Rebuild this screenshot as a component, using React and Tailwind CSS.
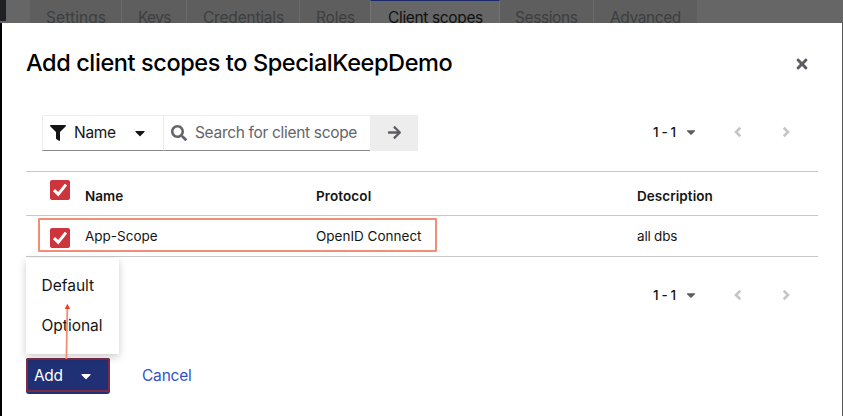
import React from "react";
import {
  FaFilter,
  FaCaretDown,
  FaSearch,
  FaTimes,
  FaArrowRight,
} from "react-icons/fa";

function Tab({ className, label, text }) {
  return (
    <div className={`h-full shrink-0 pt-[8px] leading-[20px] whitespace-nowrap ${className}`}>
      <span className={text}>{label}</span>
    </div>
  );
}

function Check() {
  return (
    <div className="flex h-5 w-5 items-center justify-center rounded-[2px] bg-[#cd343b]">
      <svg width="20" height="20" viewBox="0 0 20 20" fill="none">
        <path d="M4 10.2 L8.2 14.2 L16 4.6" stroke="white" strokeWidth="3" />
      </svg>
    </div>
  );
}

function Angle({ d, className }) {
  return (
    <svg className={className} width="10" height="12" viewBox="0 0 10 12" fill="none">
      <path d={d} stroke="#c6c6c6" strokeWidth="2.6" />
    </svg>
  );
}

function Pagination() {
  return (
    <div className="flex h-[34px] w-[166px] items-center">
      <span className="w-[25px] pl-px text-[13.5px] font-medium tracking-[-0.4px] whitespace-nowrap text-[#151515]">1 - 1</span>
      <FaCaretDown className="ml-[9px] h-[14px] w-[10px] text-[#5b5d62]" size={14} />
      <Angle className="ml-[37px]" d="M7.3 1.8 L3 6 L7.3 10.2" />
      <Angle className="ml-[38px]" d="M2.7 1.8 L7 6 L2.7 10.2" />
    </div>
  );
}

export default function App() {
  return (
    <div className="relative h-[416px] w-[843px] overflow-hidden bg-black font-['Inter',sans-serif] text-[#151515]">
      <div className="flex h-[23px] bg-[#666666] text-[15.5px] text-[#3c3e41]">
        <div className="h-[21px] w-[6px] shrink-0 bg-[#202124]" />
        <div className="w-[24px] shrink-0" />
        <Tab label="Settings" className="w-[92px] border-r border-[#6c6c6c] bg-[#5e5e5e] pl-[16px]" text="tracking-[0.1px]" />
        <Tab label="Keys" className="w-[65px] border-r border-[#6c6c6c] bg-[#5e5e5e] pl-[16px]" text="tracking-[-0.7px]" />
        <Tab label="Credentials" className="w-[113px] border-r border-[#6c6c6c] bg-[#5e5e5e] pl-[16px]" text="tracking-[-0.2px]" />
        <Tab label="Roles" className="w-[70px] bg-[#5e5e5e] pl-[16px]" text="tracking-[-0.2px]" />
        <div className="h-full w-[130px] shrink-0 border-x border-t border-x-[#737373] border-t-[#1b2868] bg-[#666666] pt-[7px] pl-[17px] leading-[20px] whitespace-nowrap text-[#111111]">
          <span className="tracking-[-0.35px]">Client scopes</span>
        </div>
        <Tab label="Sessions" className="w-[94px] border-r border-[#6c6c6c] bg-[#5e5e5e] pl-[15px]" text="tracking-[-0.4px]" />
        <Tab label="Advanced" className="w-[103px] bg-[#5e5e5e] pl-[16px]" text="tracking-[-0.4px]" />
      </div>

      <div className="relative ml-[2px] h-[393px] border-r border-[#58585a] bg-white pr-6 pl-6">
        <div className="flex h-[92px] items-start justify-between pt-[24px]">
          <h1 className="text-[23.5px] leading-[32px] font-medium tracking-[-0.4px] whitespace-nowrap text-black">
            Add client scopes to SpecialKeepDemo
          </h1>
          <FaTimes className="mt-[9px] mr-[8px] text-[#5b5d62]" size={16} />
        </div>

        <div className="flex h-[56px] justify-between">
          <div className="ml-4 flex h-9 text-[15.5px]">
            <div className="flex w-[122px] items-center border border-[#ededed] border-b-[#85878a] pl-[7px]">
              <FaFilter size={16} />
              <span className="ml-[8px] w-[58px] tracking-[-0.3px]">Name</span>
              <FaCaretDown size={16} />
            </div>
            <div className="flex w-[206px] items-center border-t border-b border-t-[#ededed] border-b-[#85878a] pl-[7px] text-[#63656a]">
              <FaSearch size={16} />
              <span className="ml-[8px] tracking-[-0.32px] whitespace-nowrap">Search for client scope</span>
            </div>
            <div className="flex w-12 items-center justify-center bg-[#ededed] text-[#5b5d62]">
              <FaArrowRight className="mb-[2px]" size={15} />
            </div>
          </div>
          <Pagination />
        </div>

        <div className="h-[86px] border-y border-[#c8c8c8] text-[13.5px]">
          <div className="flex h-[44px] border-b border-[#c8c8c8] font-semibold">
            <div className="w-[59px] pt-[8px] pl-6"><Check /></div>
            <div className="w-[231px] pt-[14px] leading-[20px]">Name</div>
            <div className="w-[321px] pt-[14px] leading-[20px] tracking-[0.1px]">Protocol</div>
            <div className="pt-[14px] leading-[20px] tracking-[0.05px]">Description</div>
          </div>
          <div className="flex h-[40px]">
            <div className="w-[59px] pt-[12px] pl-6"><Check /></div>
            <div className="w-[231px] pt-[10px] leading-[20px]">App-Scope</div>
            <div className="w-[321px] pt-[10px] leading-[20px]">OpenID Connect</div>
            <div className="pt-[10px] leading-[20px] tracking-[-0.2px]">all dbs</div>
          </div>
        </div>

        <div className="flex h-[101px] justify-end pt-[21px]">
          <Pagination />
        </div>

        <div className="flex h-9 items-center text-[15.5px]">
          <div className="h-9 w-[84px] rounded-[3px] bg-[#1f3075]">
            <div className="flex h-[34px] items-center rounded-[2px] border-2 border-[#7d2b43] pl-[6px] text-white">
              <span className="w-[44px] pt-[2px] tracking-[-0.4px]">Add</span>
              <FaCaretDown className="mt-[2px]" size={16} />
            </div>
          </div>
          <span className="ml-[32px] tracking-[-0.2px] text-[#3353c5]">Cancel</span>
        </div>
      </div>

      <div className="absolute top-[258px] left-[26px] h-[96px] w-[93px] bg-white pt-[8px] text-[15.5px] shadow-[0_3px_8px_rgba(0,0,0,0.2)]">
        <div className="h-10 pl-[15.5px] leading-[40px]">Default</div>
        <div className="h-10 pl-[15.5px] leading-[40px]">Optional</div>
      </div>
      <div className="absolute top-[218px] left-[38px] h-[34px] w-[399px] rounded-[1px] border-2 border-[#f38d76]" />
      <svg className="absolute top-[303px] left-[61px]" width="12" height="56" viewBox="0 0 12 56">
        <path d="M5.4 56 L6.3 6" stroke="#f38d76" strokeWidth="1.8" />
        <path d="M6.4 0.8 L9.1 6 H3.7 Z" fill="#ef3d25" />
      </svg>
    </div>
  );
}
